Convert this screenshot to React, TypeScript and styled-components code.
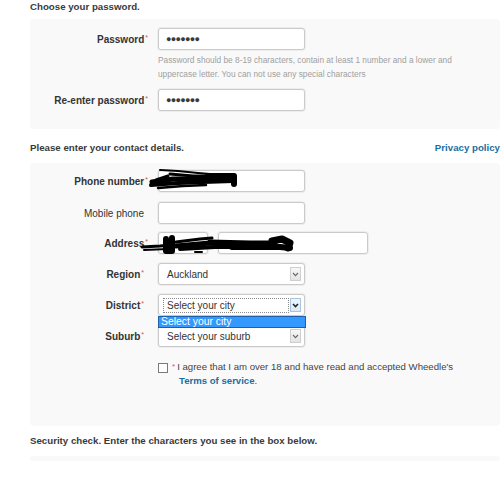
import React from "react";
import styled, { createGlobalStyle } from "styled-components";

const Global = createGlobalStyle`
  html, body { margin: 0; padding: 0; background: #fff; }
  body { font-family: "Liberation Sans", Arial, sans-serif; color: #333; }
  * { box-sizing: border-box; }
`;

const Page = styled.div`
  width: 504px;
  padding: 0 4px 0 30px;
`;

const SectionHead = styled.div<{ $top: number; $bottom: number }>`
  display: flex;
  justify-content: space-between;
  align-items: center;
  padding: ${(p) => p.$top}px 0 ${(p) => p.$bottom}px 0;
  font-size: 9.7px;
  line-height: 12px;
  font-weight: bold;
  color: #3a3a3a;
`;

const Link = styled.a`
  color: #1b6e9f;
  font-weight: bold;
  text-decoration: none;
`;

const Panel = styled.div<{ $pt: number; $pb: number; $h?: number }>`
  position: relative;
  background: #f9f9f9;
  border-radius: 4px;
  padding: ${(p) => p.$pt}px 0 ${(p) => p.$pb}px 0;
  ${(p) => (p.$h !== undefined ? `height: ${p.$h}px;` : "")}
  display: flex;
  flex-direction: column;
`;

const Row = styled.div<{ $mb: number; $mt?: number }>`
  display: grid;
  grid-template-columns: 118px 1fr;
  column-gap: 10px;
  align-items: start;
  margin-top: ${(p) => p.$mt ?? 0}px;
  margin-bottom: ${(p) => p.$mb}px;
`;

const Label = styled.div<{ $bold?: boolean; $inset?: number }>`
  height: 22px;
  display: flex;
  align-items: center;
  justify-content: flex-end;
  padding-right: ${(p) => p.$inset ?? 0}px;
  font-size: 10px;
  font-weight: ${(p) => (p.$bold ? "bold" : "normal")};
  color: #333;
  white-space: nowrap;
`;

const Star = styled.span`
  color: #d2543f;
  font-size: 7px;
  font-weight: normal;
  align-self: flex-start;
  margin-top: 6px;
  margin-left: 1px;
`;

const InlineStar = styled.span`
  color: #d2543f;
  font-size: 8px;
  margin-right: 2px;
  vertical-align: 1px;
`;

const Field = styled.div`
  display: flex;
  flex-direction: column;
`;

const Inline = styled.div`
  display: flex;
  gap: 10px;
`;

const Input = styled.input<{ $w: number }>`
  width: ${(p) => p.$w}px;
  height: 22px;
  border: 1px solid #cacaca;
  border-radius: 3px;
  box-shadow: 0 0 0 1px #ededed;
  background: #fff;
  padding: 0 7px;
  font-family: "Liberation Sans", Arial, sans-serif;
  font-size: 10px;
  color: #333;
  outline: none;
`;

const Dots = styled.div`
  width: 147px;
  height: 22px;
  border: 1px solid #cacaca;
  border-radius: 3px;
  box-shadow: 0 0 0 1px #ededed;
  background: #fff;
  padding: 0 7px;
  display: flex;
  align-items: center;
  font-size: 9px;
  letter-spacing: -0.7px;
  color: #3a3a3a;
`;

const Hint = styled.div`
  margin-top: 3px;
  font-size: 8.3px;
  line-height: 14px;
  color: #a0a0a0;
  width: 310px;
`;

const SelectBox = styled.div`
  position: relative;
  width: 147px;
  height: 22px;
  border: 1px solid #cacaca;
  border-radius: 3px;
  box-shadow: 0 0 0 1px #ededed;
  background: #fff;
  display: flex;
  align-items: center;
  padding: 0 3px 0 4px;
  font-size: 10px;
  color: #333;
`;

const SelectText = styled.div<{ $focus?: boolean }>`
  flex: 1;
  height: 15px;
  display: flex;
  align-items: center;
  padding-left: 3px;
  border: 1px ${(p) => (p.$focus ? "dotted #8a8a8a" : "solid transparent")};
  margin-right: 1px;
`;

const Arrow = styled.div<{ $focus?: boolean }>`
  width: 11px;
  height: 14px;
  border: 1px solid ${(p) => (p.$focus ? "#a9c4dc" : "#cfcfcf")};
  background: ${(p) =>
    p.$focus ? "linear-gradient(#eef6fc, #dbeaf6)" : "linear-gradient(#f7f7f7, #e4e4e4)"};
  display: flex;
  align-items: center;
  justify-content: center;
`;

const DropList = styled.div`
  position: absolute;
  left: -1px;
  top: 21px;
  width: 148px;
  height: 12px;
  background: #3399ff;
  border: 1px solid #1f5fa8;
  color: #fff;
  font-size: 10.4px;
  line-height: 10px;
  padding-left: 2px;
  z-index: 2;
`;

const Check = styled.div`
  display: flex;
  gap: 4px;
  align-items: flex-start;
  margin-top: 13px;
  font-size: 9.6px;
  line-height: 14px;
  color: #444;
`;

const Box = styled.div`
  width: 10px;
  height: 10px;
  border: 1px solid #7a7a7a;
  background: #fff;
  margin-top: 3px;
  flex: none;
`;

const Terms = styled.div`
  padding-left: 7px;
`;

const Scribble = styled.svg<{ $x: number; $y: number }>`
  position: absolute;
  left: ${(p) => p.$x}px;
  top: ${(p) => p.$y}px;
  z-index: 3;
  pointer-events: none;
`;

const Chevron = ({ dark }: { dark?: boolean }) => (
  <svg width="7" height="5" viewBox="0 0 7 5">
    <path d="M1 1 L3.5 3.6 L6 1" fill="none" stroke={dark ? "#222" : "#666"} strokeWidth={dark ? 1.5 : 1.1} />
  </svg>
);

const Select = ({ text, focus, open }: { text: string; focus?: boolean; open?: boolean }) => (
  <SelectBox>
    <SelectText $focus={focus}>{text}</SelectText>
    <Arrow $focus={focus}>
      <Chevron dark={focus} />
    </Arrow>
    {open && <DropList>Select your city</DropList>}
  </SelectBox>
);

const Req = ({ children, bold = true, inset }: { children: React.ReactNode; bold?: boolean; inset?: number }) => (
  <Label $bold={bold} $inset={inset}>
    {children}
    <Star>*</Star>
  </Label>
);

export default function App() {
  return (
    <>
      <Global />
      <Page>
        <SectionHead $top={1} $bottom={6}>
          <span>Choose your password.</span>
        </SectionHead>
        <Panel $pt={9} $pb={18}>
          <Row $mb={0}>
            <Req>Password</Req>
            <Field>
              <Dots>●●●●●●●</Dots>
              <Hint>
                Password should be 8-19 characters, contain at least 1 number and a lower and uppercase letter. You can not use any special characters
              </Hint>
            </Field>
          </Row>
          <Row $mb={0} $mt={8}>
            <Req>Re-enter password</Req>
            <Dots>●●●●●●●</Dots>
          </Row>
        </Panel>

        <SectionHead $top={13} $bottom={9}>
          <span>Please enter your contact details.</span>
          <Link href="#">Privacy policy</Link>
        </SectionHead>
        <Panel $pt={7} $pb={38}>
          <Scribble $x={118} $y={4} width="90" height="26" viewBox="0 0 90 26">
            <g stroke="#000" strokeLinecap="round" strokeLinejoin="round" fill="none">
              <path d="M12 3 L30 4 L50 6 L62 7" strokeWidth="2" />
              <path d="M22 7 L45 9 L70 9 L86 8" strokeWidth="3" />
              <path d="M4 15 L25 12 L50 12 L86 11" strokeWidth="5" />
              <path d="M3 18 L30 16 L55 15 L85 14" strokeWidth="4" />
              <path d="M10 21 L35 19 L58 18" strokeWidth="2.5" />
              <path d="M60 9 L86 9 L86 17" strokeWidth="6" />
              <path d="M20 9 L8 13" strokeWidth="3" />
            </g>
          </Scribble>
          <Scribble $x={110} $y={70} width="156" height="24" viewBox="0 0 156 24">
            <g stroke="#000" strokeLinecap="round" strokeLinejoin="round" fill="none">
              <path d="M2 14 L20 13 L32 12" strokeWidth="3" />
              <path d="M4 17 L28 16" strokeWidth="2" />
              <path d="M26 6 L26 18 L32 18 L32 5" strokeWidth="6" />
              <path d="M36 9 L60 6 L72 5" strokeWidth="3" />
              <path d="M36 13 L70 10 L95 11" strokeWidth="5" />
              <path d="M40 16 L75 14 L110 14" strokeWidth="4" />
              <path d="M70 9 L110 10 L135 10" strokeWidth="5" />
              <path d="M92 14 L140 14 L150 15" strokeWidth="6" />
              <path d="M132 8 L142 6 L150 10 L148 15" strokeWidth="7" />
              <path d="M55 19 L62 19" strokeWidth="2" />
            </g>
          </Scribble>
          <Row $mb={10}>
            <Req>Phone number</Req>
            <Input $w={147} readOnly />
          </Row>
          <Row $mb={8}>
            <Label $inset={4}>Mobile phone</Label>
            <Input $w={147} readOnly />
          </Row>
          <Row $mb={9}>
            <Req>Address</Req>
            <Inline>
              <Input $w={50} readOnly />
              <Input $w={150} readOnly />
            </Inline>
          </Row>
          <Row $mb={9}>
            <Req inset={4}>Region</Req>
            <Select text="Auckland" />
          </Row>
          <Row $mb={9}>
            <Req inset={4}>District</Req>
            <Select text="Select your city" focus open />
          </Row>
          <Row $mb={0}>
            <Req inset={4}>Suburb</Req>
            <Select text="Select your suburb" />
          </Row>
          <Row $mb={0}>
            <span />
            <Check>
              <Box />
              <div>
                <InlineStar>*</InlineStar>I agree that I am over 18 and have read and accepted Wheedle's
                <Terms>
                  <Link href="#">Terms of service</Link>.
                </Terms>
              </div>
            </Check>
          </Row>
        </Panel>

        <SectionHead $top={9} $bottom={9}>
          <span>Security check. Enter the characters you see in the box below.</span>
        </SectionHead>
        <Panel $pt={0} $pb={0} $h={5} />
      </Page>
    </>
  );
}
